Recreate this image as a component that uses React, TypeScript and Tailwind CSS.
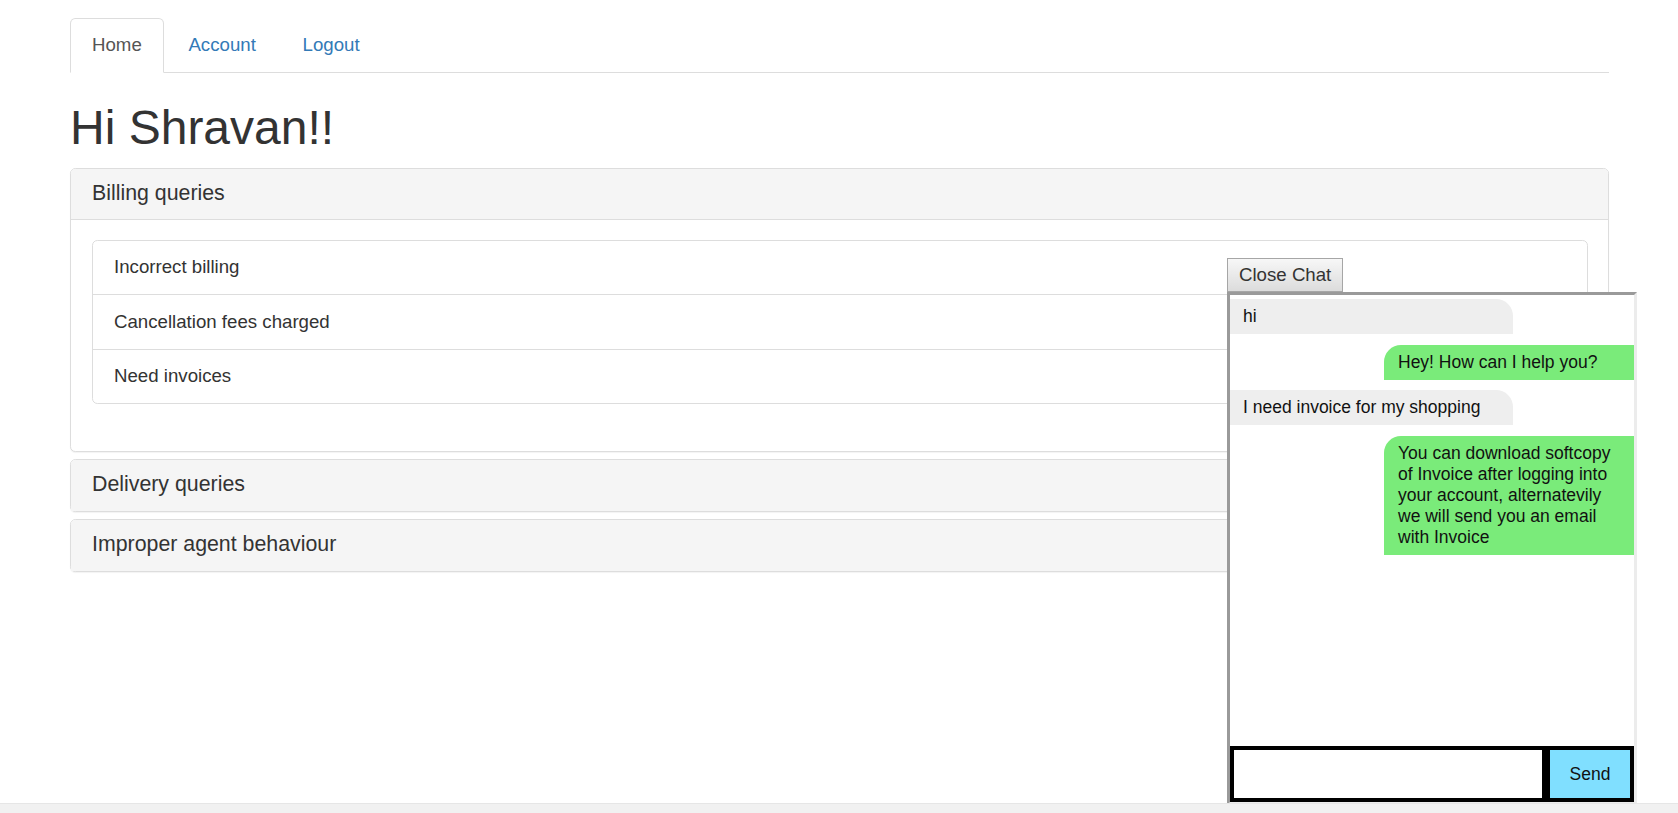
import React from 'react';

const tabs = ['Home', 'Account', 'Logout'];
const billingItems = ['Incorrect billing', 'Cancellation fees charged', 'Need invoices'];

type Msg = { from: 'user' | 'bot'; text: string };

const messages: Msg[] = [
  { from: 'user', text: 'hi' },
  { from: 'bot', text: 'Hey! How can I help you?' },
  { from: 'user', text: 'I need invoice for my shopping' },
  {
    from: 'bot',
    text: 'You can download softcopy of Invoice after logging into your account, alternatevily we will send you an email with Invoice',
  },
];

const PanelHeading = ({ title, open }: { title: string; open?: boolean }) => (
  <div
    className={`bg-[#f5f5f5] px-[21px] py-[13.33px] rounded-t-[4px] border-b ${
      open ? 'border-[#ddd]' : 'border-transparent'
    }`}
  >
    <h4 className="text-[21.33px] leading-[1.1] text-[#333]">{title}</h4>
  </div>
);

const ChatWidget = () => (
  <div className="fixed right-[41px] bottom-[8px] flex flex-col items-start font-['Liberation_Sans',Arial,sans-serif]">
    <button className="h-[34px] px-[11px] border border-[#a6a6a6] bg-gradient-to-b from-[#f7f7f7] to-[#dcdcdc] text-[18.67px] leading-none text-[#333]">
      Close Chat
    </button>
    <div className="w-[410px] h-[513px] flex flex-col bg-white border-[3px] border-t-[#9a9a9a] border-l-[#9a9a9a] border-r-[#ececec] border-b-[#ececec]">
      <div className="flex-1 flex flex-col gap-[10.5px] pt-[4px]">
        {messages.map((m, i) =>
          m.from === 'user' ? (
            <div
              key={i}
              className="self-start w-[283px] bg-[#eeeeee] rounded-tr-[17px] px-[13px] py-[7px] text-[17.5px] leading-[21px] text-[#111]"
            >
              {m.text}
            </div>
          ) : (
            <div
              key={i}
              className="self-end w-[250px] bg-[#7aeb7a] rounded-tl-[17px] px-[14px] py-[7px] text-[17.5px] leading-[21px] text-[#111]"
            >
              {m.text}
            </div>
          )
        )}
      </div>
      <div className="h-[56px] flex">
        <input className="w-[316px] h-full border-4 border-black bg-white outline-none px-2 text-[17.5px]" />
        <button className="w-[88px] h-full border-4 border-black bg-[#80dfff] text-[17.5px] text-[#111]">
          Send
        </button>
      </div>
    </div>
  </div>
);

export default function App() {
  return (
    <div className="h-[813px] bg-white overflow-hidden font-['Liberation_Sans',Arial,sans-serif] text-[#333]">
      <div className="pl-[70px] pr-[69px] pt-[18px]">
        <ul className="flex border-b border-[#ddd]">
          {tabs.map((t, i) => (
            <li key={t} className="mr-[2.67px] -mb-px">
              <a
                className={`block px-[21px] py-[13.33px] text-[18.67px] leading-[26.67px] border rounded-t-[5.33px] ${
                  i === 0
                    ? 'border-[#ddd] border-b-white bg-white text-[#555]'
                    : 'border-transparent text-[#337ab7]'
                }`}
              >
                {t}
              </a>
            </li>
          ))}
        </ul>

        <h1 className="mt-[28.5px] mb-[13.33px] text-[48px] leading-[1.1] font-medium text-[#333]">Hi Shravan!!</h1>

        <div className="flex flex-col gap-[7px]">
          <div className="border border-[#ddd] rounded-[5.33px] bg-white shadow-[0_1px_1px_rgba(0,0,0,0.05)]">
            <PanelHeading title="Billing queries" open />
            <div className="p-[20px] pl-[21px]">
              <ul className="mb-[26.67px] border border-[#ddd] rounded-[5.33px]">
                {billingItems.map((item, i) => (
                  <li
                    key={item}
                    className={`px-[21px] py-[13.33px] text-[18.67px] leading-[26.67px] text-[#333] ${
                      i < billingItems.length - 1 ? 'border-b border-[#ddd]' : ''
                    }`}
                  >
                    {item}
                  </li>
                ))}
              </ul>
            </div>
          </div>
          <div className="border border-[#ddd] rounded-[5.33px] bg-white shadow-[0_1px_1px_rgba(0,0,0,0.05)]">
            <PanelHeading title="Delivery queries" />
          </div>
          <div className="border border-[#ddd] rounded-[5.33px] bg-white shadow-[0_1px_1px_rgba(0,0,0,0.05)]">
            <PanelHeading title="Improper agent behaviour" />
          </div>
        </div>
      </div>

      <ChatWidget />

      <div className="fixed left-0 right-0 bottom-0 h-[10px] bg-[#f1f1f1] border-t border-[#e6e6e6] z-10" />
    </div>
  );
}
